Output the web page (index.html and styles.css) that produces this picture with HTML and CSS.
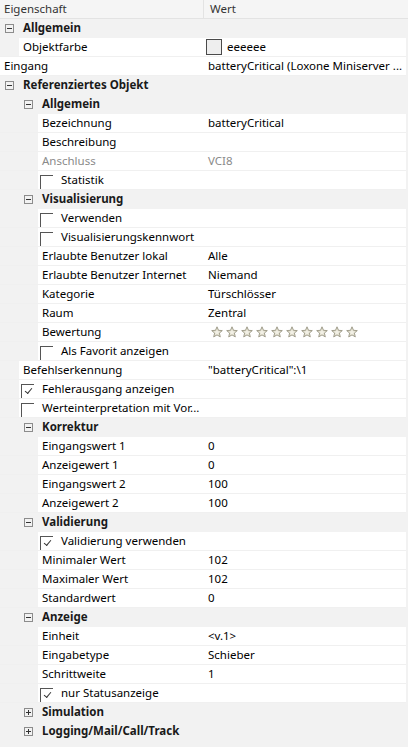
FILE: index.html
```html
<!DOCTYPE html>
<html lang="de">
<head>
<meta charset="utf-8">
<title>Eigenschaften</title>
<link rel="stylesheet" href="styles.css">
</head>
<body>
<svg width="0" height="0" class="defs">
  <defs>
    <symbol id="star" viewBox="0 0 12 12">
      <path d="M6 0.8 L7.5 4.3 L11.3 4.6 L8.4 7.1 L9.3 10.9 L6 8.9 L2.7 10.9 L3.6 7.1 L0.7 4.6 L4.5 4.3 Z" fill="#dedac8" stroke="#9a9684" stroke-width="0.9" stroke-linejoin="round"/>
      <path d="M6 3 L6.8 5.2 L9 5.4 L7.3 6.9 L7.8 9 L6 7.9 L4.2 9 L4.7 6.9 L3 5.4 L5.2 5.2 Z" fill="#f2f0e6"/>
    </symbol>
  </defs>
</svg>
<div class="grid">
  <div class="row head"><div class="name"><span class="txt">Eigenschaft</span></div><div class="val">Wert</div></div>

  <div class="row cat l0"><span class="exp minus"></span><span class="txt">Allgemein</span></div>
  <div class="row prop"><div class="name"><span class="ind l1"></span><span class="txt">Objektfarbe</span></div><div class="val"><span class="swatch"></span>eeeeee</div></div>
  <div class="row prop"><div class="name"><span class="txt">Eingang</span></div><div class="val">batteryCritical (Loxone Miniserver ...</div></div>

  <div class="row cat l0"><span class="exp minus"></span><span class="txt">Referenziertes Objekt</span></div>
  <div class="row cat l1"><span class="exp minus"></span><span class="txt">Allgemein</span></div>
  <div class="row prop"><div class="name"><span class="ind l2"></span><span class="txt">Bezeichnung</span></div><div class="val">batteryCritical</div></div>
  <div class="row prop"><div class="name"><span class="ind l2"></span><span class="txt">Beschreibung</span></div><div class="val"></div></div>
  <div class="row prop dis"><div class="name"><span class="ind l2"></span><span class="txt">Anschluss</span></div><div class="val">VCI8</div></div>
  <div class="row prop"><div class="name"><span class="ind l2"></span><span class="cb"></span><span class="txt">Statistik</span></div><div class="val"></div></div>

  <div class="row cat l1"><span class="exp minus"></span><span class="txt">Visualisierung</span></div>
  <div class="row prop"><div class="name"><span class="ind l2"></span><span class="cb"></span><span class="txt">Verwenden</span></div><div class="val"></div></div>
  <div class="row prop"><div class="name"><span class="ind l2"></span><span class="cb"></span><span class="txt">Visualisierungskennwort</span></div><div class="val"></div></div>
  <div class="row prop"><div class="name"><span class="ind l2"></span><span class="txt">Erlaubte Benutzer lokal</span></div><div class="val">Alle</div></div>
  <div class="row prop"><div class="name"><span class="ind l2"></span><span class="txt">Erlaubte Benutzer Internet</span></div><div class="val">Niemand</div></div>
  <div class="row prop"><div class="name"><span class="ind l2"></span><span class="txt">Kategorie</span></div><div class="val">Türschlösser</div></div>
  <div class="row prop"><div class="name"><span class="ind l2"></span><span class="txt">Raum</span></div><div class="val">Zentral</div></div>
  <div class="row prop"><div class="name"><span class="ind l2"></span><span class="txt">Bewertung</span></div><div class="val stars">
    <svg class="star"><use href="#star"/></svg><svg class="star"><use href="#star"/></svg><svg class="star"><use href="#star"/></svg><svg class="star"><use href="#star"/></svg><svg class="star"><use href="#star"/></svg><svg class="star"><use href="#star"/></svg><svg class="star"><use href="#star"/></svg><svg class="star"><use href="#star"/></svg><svg class="star"><use href="#star"/></svg><svg class="star"><use href="#star"/></svg>
  </div></div>
  <div class="row prop"><div class="name"><span class="ind l2"></span><span class="cb"></span><span class="txt">Als Favorit anzeigen</span></div><div class="val"></div></div>

  <div class="row prop"><div class="name"><span class="ind l1"></span><span class="txt">Befehlserkennung</span></div><div class="val">"batteryCritical":\1</div></div>
  <div class="row prop"><div class="name"><span class="ind l1"></span><span class="cb on"></span><span class="txt">Fehlerausgang anzeigen</span></div><div class="val"></div></div>
  <div class="row prop"><div class="name"><span class="ind l1"></span><span class="cb"></span><span class="txt">Werteinterpretation mit Vor...</span></div><div class="val"></div></div>

  <div class="row cat l1"><span class="exp minus"></span><span class="txt">Korrektur</span></div>
  <div class="row prop"><div class="name"><span class="ind l2"></span><span class="txt">Eingangswert 1</span></div><div class="val">0</div></div>
  <div class="row prop"><div class="name"><span class="ind l2"></span><span class="txt">Anzeigewert 1</span></div><div class="val">0</div></div>
  <div class="row prop"><div class="name"><span class="ind l2"></span><span class="txt">Eingangswert 2</span></div><div class="val">100</div></div>
  <div class="row prop"><div class="name"><span class="ind l2"></span><span class="txt">Anzeigewert 2</span></div><div class="val">100</div></div>

  <div class="row cat l1"><span class="exp minus"></span><span class="txt">Validierung</span></div>
  <div class="row prop"><div class="name"><span class="ind l2"></span><span class="cb on"></span><span class="txt">Validierung verwenden</span></div><div class="val"></div></div>
  <div class="row prop"><div class="name"><span class="ind l2"></span><span class="txt">Minimaler Wert</span></div><div class="val">102</div></div>
  <div class="row prop"><div class="name"><span class="ind l2"></span><span class="txt">Maximaler Wert</span></div><div class="val">102</div></div>
  <div class="row prop"><div class="name"><span class="ind l2"></span><span class="txt">Standardwert</span></div><div class="val">0</div></div>

  <div class="row cat l1"><span class="exp minus"></span><span class="txt">Anzeige</span></div>
  <div class="row prop"><div class="name"><span class="ind l2"></span><span class="txt">Einheit</span></div><div class="val">&lt;v.1&gt;</div></div>
  <div class="row prop"><div class="name"><span class="ind l2"></span><span class="txt">Eingabetype</span></div><div class="val">Schieber</div></div>
  <div class="row prop"><div class="name"><span class="ind l2"></span><span class="txt">Schrittweite</span></div><div class="val">1</div></div>
  <div class="row prop"><div class="name"><span class="ind l2"></span><span class="cb on"></span><span class="txt">nur Statusanzeige</span></div><div class="val"></div></div>

  <div class="row cat l1"><span class="exp plus"></span><span class="txt">Simulation</span></div>
  <div class="row cat l1"><span class="exp plus"></span><span class="txt">Logging/Mail/Call/Track</span></div>
</div>
</body>
</html>
```
FILE: styles.css
```css
* { box-sizing: border-box; }
html, body {
  margin: 0;
  padding: 0;
  background: #f2f2f2;
}
body {
  font-family: "Noto Sans", "Open Sans", sans-serif;
  font-size: 11.5px;
  color: #000;
  width: 408px;
  height: 747px;
  overflow: hidden;
}
.defs { position: absolute; }
.grid {
  display: flex;
  flex-direction: column;
  padding-right: 2px;
}
.row {
  display: flex;
  align-items: stretch;
  height: 19px;
  border-bottom: 1px solid #f0f0f0;
  line-height: 18px;
  white-space: nowrap;
}
.head {
  background: #f5f5f5;
  border-bottom: 1px solid #e3e3e3;
  color: #333;
  margin-right: -2px;
}
.head .name { background: transparent; border-right: 1px solid #e3e3e3; }
.head .val { padding-left: 6px; }
.name {
  width: 204px;
  flex: none;
  display: flex;
  align-items: center;
  overflow: hidden;
  background: #fff;
}
.txt { padding-left: 4px; }
.val {
  flex: 1;
  display: flex;
  align-items: center;
  padding-left: 4px;
  background: #fff;
  overflow: hidden;
}
.head .val { background: transparent; }
.ind {
  align-self: stretch;
  background: #f2f2f2;
  flex: none;
  margin-bottom: -1px;
}
.ind.l1 { width: 19px; }
.ind.l2 { width: 38px; }
.dis { color: #8a8a8a; }
.cat {
  background: #f2f2f2;
  border-bottom-color: #f2f2f2;
  align-items: center;
  font-weight: bold;
  color: #1a1a1a;
}
.cat .txt { padding-left: 9px; }
.cat.l0 { padding-left: 5px; }
.cat.l1 { padding-left: 24px; }
.exp {
  width: 9px;
  height: 9px;
  border: 1px solid #8c8c8c;
  position: relative;
  flex: none;
}
.exp::before {
  content: "";
  position: absolute;
  left: 1px;
  top: 3px;
  width: 5px;
  height: 1px;
  background: #333;
}
.exp.plus::after {
  content: "";
  position: absolute;
  left: 3px;
  top: 1px;
  width: 1px;
  height: 5px;
  background: #333;
}
.cb {
  width: 13px;
  height: 14px;
  margin-left: 2px;
  margin-right: 4px;
  align-self: flex-end;
  flex: none;
  border-top: 1px solid #555;
  border-left: 1px solid #555;
  position: relative;
}
.cb.on::after {
  content: "";
  position: absolute;
  left: 3px;
  top: 3px;
  width: 6px;
  height: 3px;
  border-left: 1px solid #333;
  border-bottom: 1px solid #333;
  transform: rotate(-50deg);
}
.swatch {
  width: 16px;
  height: 16px;
  border: 1px solid #4a4a4a;
  background: #eeeeee;
  margin-left: -2px;
  margin-right: 5px;
  flex: none;
}
.stars { padding-left: 7px; gap: 3px; }
.star { width: 12px; height: 12px; flex: none; }
```
